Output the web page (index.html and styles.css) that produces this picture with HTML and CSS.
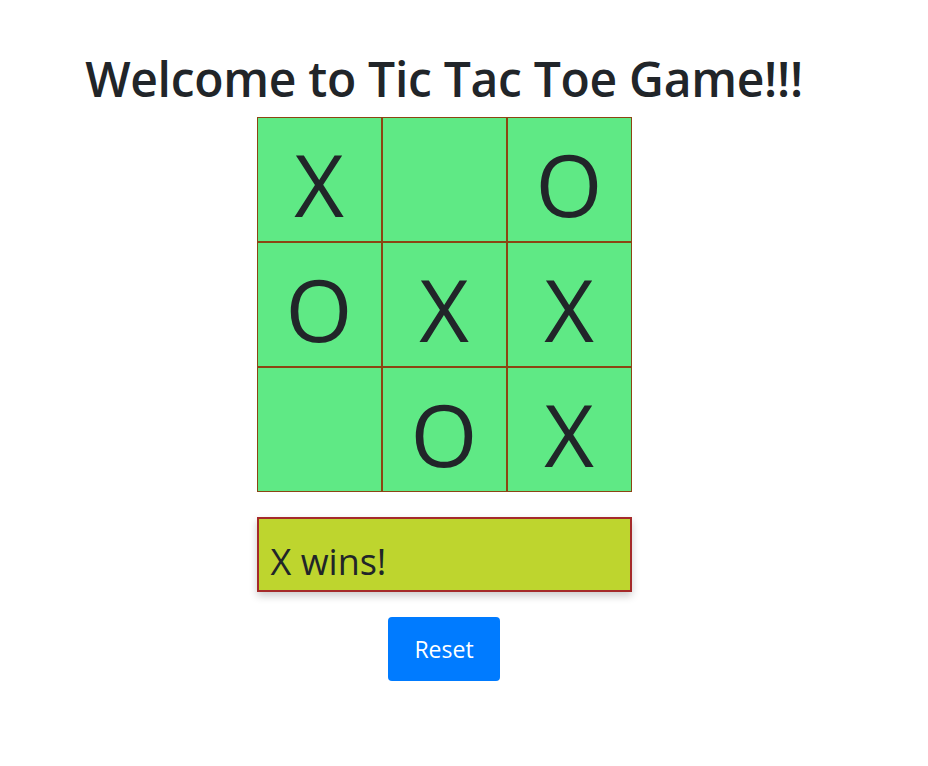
FILE: index.html
```html
<!DOCTYPE html>
<html>
<head>
<meta charset="utf-8">
<link rel="stylesheet" href="styles.css">
</head>
<body>
<div class="app">
  <h1 class="title">Welcome to Tic Tac Toe Game!!!</h1>
  <div class="board">
    <div class="cell">X</div>
    <div class="cell"></div>
    <div class="cell">O</div>
    <div class="cell">O</div>
    <div class="cell">X</div>
    <div class="cell">X</div>
    <div class="cell"></div>
    <div class="cell">O</div>
    <div class="cell">X</div>
  </div>
  <div class="status">X wins!</div>
  <button class="reset">Reset</button>
</div>
</body>
</html>
```
FILE: styles.css
```css
html, body {
  margin: 0;
  padding: 0;
  background: #fff;
}
body {
  font-family: "Open Sans", "Noto Sans", sans-serif;
  color: #212529;
}
.app {
  width: 888px;
  display: flex;
  flex-direction: column;
  align-items: center;
}
.title {
  margin: 48px 0 0 0;
  font-size: 48px;
  font-weight: 600;
  line-height: 62px;
  letter-spacing: -0.3px;
}
.board {
  margin-top: 7px;
  display: grid;
  grid-template-columns: repeat(3, 125px);
  grid-template-rows: repeat(3, 125px);
}
.cell {
  background: #5fe985;
  border: 1px solid #8b4513;
  display: flex;
  align-items: center;
  justify-content: center;
  font-size: 86px;
  line-height: 1;
  padding-top: 8px;
  box-sizing: border-box;
}
.status {
  margin-top: 25px;
  width: 375px;
  height: 75px;
  box-sizing: border-box;
  background: #bed52e;
  border: 2px solid #a52a2a;
  box-shadow: 0 4px 8px rgba(0,0,0,0.2);
  font-size: 36px;
  line-height: 1;
  padding: 25px 12px 0;
}
.reset {
  margin-top: 25px;
  width: 112px;
  height: 64px;
  background: #007bff;
  color: #fff;
  border: none;
  border-radius: 4px;
  font-family: "Open Sans", "Noto Sans", sans-serif;
  font-size: 23px;
}
```
